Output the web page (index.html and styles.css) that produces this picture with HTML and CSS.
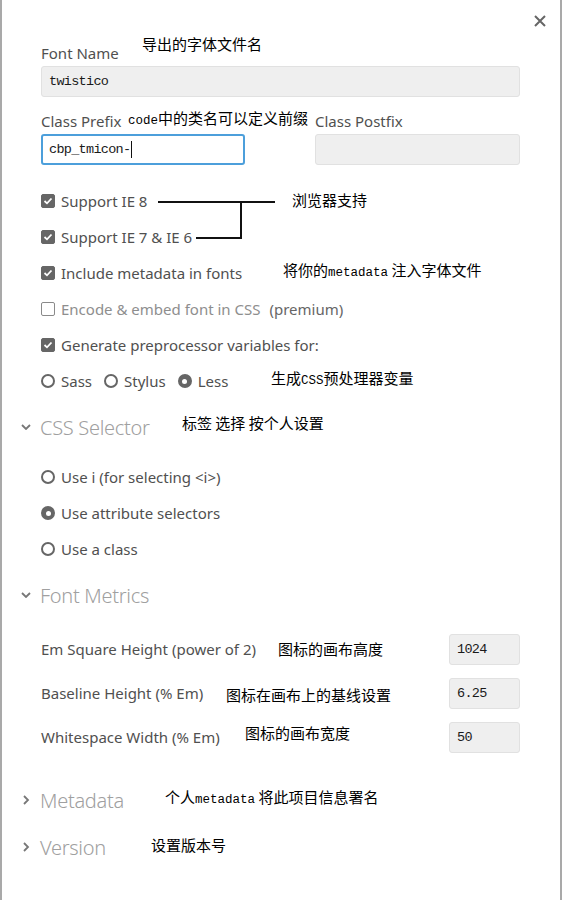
FILE: index.html
```html
<!DOCTYPE html>
<html lang="en">
<head>
<meta charset="utf-8">
<title>Font Preferences</title>
<link rel="stylesheet" href="styles.css">
</head>
<body>
<div class="panel">
  <div class="close-row">
    <svg class="close" width="12" height="12" viewBox="0 0 12 12"><path d="M1 1 L11 11 M11 1 L1 11" stroke="#666" stroke-width="2" fill="none"/></svg>
  </div>

  <div class="field">
    <label class="lbl">Font Name</label>
    <div class="input ro mono">twistico</div>
  </div>

  <div class="field-row">
    <div class="field col1">
      <label class="lbl">Class Prefix</label>
      <div class="input active mono">cbp_tmicon-<span class="caret"></span></div>
    </div>
    <div class="field col2">
      <label class="lbl">Class Postfix</label>
      <div class="input ro"></div>
    </div>
  </div>

  <ul class="opts first">
    <li class="opt"><span class="cb on"><svg width="10" height="8" viewBox="0 0 10 8"><path d="M1.5 4 L4 6.3 L8.5 1.5" stroke="#fff" stroke-width="1.8" fill="none"/></svg></span>Support IE 8</li>
    <li class="opt"><span class="cb on"><svg width="10" height="8" viewBox="0 0 10 8"><path d="M1.5 4 L4 6.3 L8.5 1.5" stroke="#fff" stroke-width="1.8" fill="none"/></svg></span>Support IE 7 &amp; IE 6</li>
    <li class="opt"><span class="cb on"><svg width="10" height="8" viewBox="0 0 10 8"><path d="M1.5 4 L4 6.3 L8.5 1.5" stroke="#fff" stroke-width="1.8" fill="none"/></svg></span>Include metadata in fonts</li>
    <li class="opt"><span class="cb"></span><span class="disabled">Encode &amp; embed font in CSS</span><span class="premium">(premium)</span></li>
    <li class="opt"><span class="cb on"><svg width="10" height="8" viewBox="0 0 10 8"><path d="M1.5 4 L4 6.3 L8.5 1.5" stroke="#fff" stroke-width="1.8" fill="none"/></svg></span>Generate preprocessor variables for:</li>
    <li class="opt">
      <span class="ri"><span class="rd"></span>Sass</span>
      <span class="ri"><span class="rd"></span>Stylus</span>
      <span class="ri"><span class="rd on"></span>Less</span>
    </li>
  </ul>

  <h2 class="sec"><svg class="chev" width="10" height="6" viewBox="0 0 10 6"><path d="M1 1 L5 5 L9 1" stroke="#777" stroke-width="1.8" fill="none"/></svg>CSS Selector</h2>
  <ul class="opts">
    <li class="opt"><span class="rd"></span>Use i (for selecting &lt;i&gt;)</li>
    <li class="opt"><span class="rd on"></span>Use attribute selectors</li>
    <li class="opt"><span class="rd"></span>Use a class</li>
  </ul>

  <h2 class="sec"><svg class="chev" width="10" height="6" viewBox="0 0 10 6"><path d="M1 1 L5 5 L9 1" stroke="#777" stroke-width="1.8" fill="none"/></svg>Font Metrics</h2>
  <div class="metrics">
    <div class="mrow"><span>Em Square Height (power of 2)</span><div class="input ro mono small">1024</div></div>
    <div class="mrow"><span>Baseline Height (% Em)</span><div class="input ro mono small">6.25</div></div>
    <div class="mrow"><span>Whitespace Width (% Em)</span><div class="input ro mono small">50</div></div>
  </div>

  <h2 class="sec sec-meta"><svg class="chev" width="10" height="10" viewBox="0 0 10 10"><path d="M3 1 L7 5 L3 9" stroke="#777" stroke-width="1.8" fill="none"/></svg>Metadata</h2>
  <h2 class="sec sec-ver"><svg class="chev" width="10" height="10" viewBox="0 0 10 10"><path d="M3 1 L7 5 L3 9" stroke="#777" stroke-width="1.8" fill="none"/></svg>Version</h2>

  <div class="notes">
    <svg class="links" width="562" height="900" viewBox="0 0 562 900">
      <path d="M158 202 H275 M241 202 V238 H196" stroke="#111" stroke-width="2" fill="none"/>
    </svg>
    <span class="note n1">导出的字体文件名</span>
    <span class="note n2"><span class="nm">code</span>中的类名可以定义前缀</span>
    <span class="note n3">浏览器支持</span>
    <span class="note n4">将你的<span class="nm">metadata</span> 注入字体文件</span>
    <span class="note n5">生成<span class="nm">CSS</span>预处理器变量</span>
    <span class="note n6">标签 选择 按个人设置</span>
    <span class="note n7">图标的画布高度</span>
    <span class="note n8">图标在画布上的基线设置</span>
    <span class="note n9">图标的画布宽度</span>
    <span class="note n10">个人<span class="nm">metadata</span> 将此项目信息署名</span>
    <span class="note n11">设置版本号</span>
  </div>
</div>
</body>
</html>
```

FILE: styles.css
```css
* { box-sizing: border-box; }
html, body { margin: 0; padding: 0; background: #fff; }
body { font-family: "Noto Sans", "Open Sans", sans-serif; }

.panel {
  position: relative;
  width: 562px;
  height: 900px;
  border-left: 2px solid #a9a9a9;
  border-right: 2px solid #a9a9a9;
  padding: 0 40px 0 39px;
  overflow: hidden;
}

.close-row {
  height: 27px;
  display: flex;
  justify-content: flex-end;
  align-items: flex-end;
  margin-right: -26px;
}
.close { display: block; }

.lbl {
  display: block;
  margin-top: 16px;
  font-size: 15px;
  line-height: 20px;
  color: #505050;
  white-space: nowrap;
}
.field-row .lbl { margin-top: 0; }

.input {
  height: 31px;
  margin-top: 3px;
  background: #efefef;
  border: 1px solid #e1e1e1;
  border-radius: 3px;
  padding: 0 7px;
  display: flex;
  align-items: center;
  color: #1a1a1a;
}
.mono {
  font-family: "Liberation Mono", "DejaVu Sans Mono", monospace;
  font-size: 13.5px;
  letter-spacing: -0.7px;
}
.input.active {
  background: #fff;
  border: 2px solid #4c9fdb;
  padding: 0 6px;
  height: 31px;
}
.caret { display: inline-block; width: 1px; height: 17px; background: #111; margin-left: 1px; }

.field-row {
  display: flex;
  margin-top: 14px;
}
.col1 { width: 204px; }
.col2 { width: 205px; margin-left: auto; }

.opts { list-style: none; margin: 18px 0 0; padding: 0; }
.opt {
  height: 36px;
  display: flex;
  align-items: center;
  font-size: 15px;
  color: #505050;
  white-space: nowrap;
}

.cb {
  width: 14px; height: 14px;
  border-radius: 2px;
  margin-right: 6px;
  border: 1.5px solid #8a8a8a;
  background: #fff;
  display: flex; align-items: center; justify-content: center;
  flex: none;
}
.cb.on { background: #666; border-color: #666; }
.disabled { color: #8e8e8e; }
.premium { margin-left: 9px; color: #666; }

.rd {
  width: 14px; height: 14px;
  border-radius: 50%;
  border: 2px solid #666;
  margin-right: 6px;
  flex: none;
  display: flex; align-items: center; justify-content: center;
}
.rd.on { background: #666; }
.rd.on::after { content: ""; width: 5px; height: 5px; border-radius: 50%; background: #fff; }
.ri { display: flex; align-items: center; margin-right: 12px; }

.sec {
  margin: 14px 0 0 -20px;
  height: 28px;
  display: flex;
  align-items: center;
  font-size: 20px;
  font-weight: 300;
  color: #a0a0a0;
  letter-spacing: -0.3px;
}
.chev { margin-right: 9px; flex: none; }
.sec-meta { margin-top: 27px; }
.sec-ver { margin-top: 19px; }

.metrics { margin-top: 18px; }
.mrow {
  height: 44px;
  display: flex;
  align-items: center;
  justify-content: space-between;
  font-size: 15px;
  color: #505050;
}
.input.small { width: 71px; margin-top: 0; }

.notes { position: absolute; left: -2px; top: 0; width: 562px; height: 900px; pointer-events: none; }
.links { position: absolute; left: 0; top: 0; }
.note {
  position: absolute;
  font-family: "Noto Sans CJK SC", "Noto Sans", sans-serif;
  font-size: 15px;
  line-height: 20px;
  color: #000;
  white-space: pre;
}
.nm { font-family: "Liberation Mono", monospace; font-size: 12.5px; }
.n1 { left: 142px; top: 34px; }
.n2 { left: 128px; top: 108px; }
.n3 { left: 292px; top: 190px; }
.n4 { left: 283px; top: 260px; }
.n5 { left: 271px; top: 368px; }
.n6 { left: 182px; top: 413px; }
.n7 { left: 278px; top: 639px; }
.n8 { left: 226px; top: 685px; }
.n9 { left: 245px; top: 723px; }
.n10 { left: 165px; top: 787px; }
.n11 { left: 151px; top: 835px; }
```
